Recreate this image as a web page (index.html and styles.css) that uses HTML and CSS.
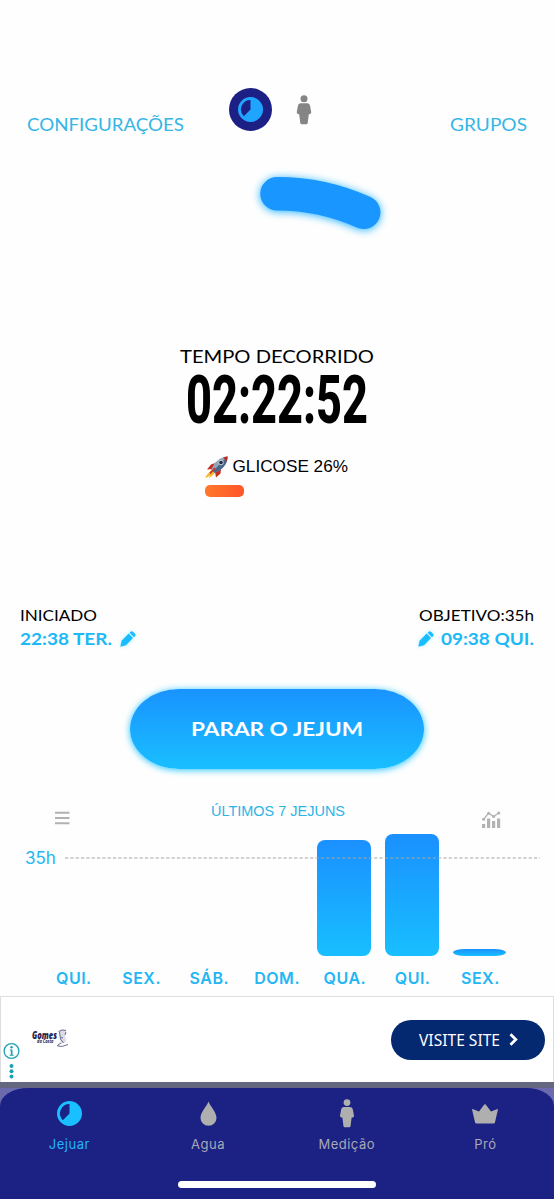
FILE: index.html
```html
<!DOCTYPE html>
<html lang="pt">
<head>
<meta charset="utf-8">
<title>Jejum</title>
<link rel="stylesheet" href="styles.css">
</head>
<body>
<svg class="defs" width="0" height="0">
  <defs>
    <symbol id="pie" viewBox="0 0 25 25"><path fill-rule="evenodd" d="M12.5 0a12.5 12.5 0 1 1 0 25a12.5 12.5 0 0 1 0-25zM12.5 3a9.5 9.5 0 0 0-6.7 16.2l6.7-6.7z"/></symbol>
    <symbol id="person" viewBox="0 0 16 30"><circle cx="8" cy="3.7" r="3.5"/><path d="M5 8.2h6c2 0 2.7 1.200 3.100 2.800L15.200 17c.2 1.400-.5 2-2.400 2.200L11.700 28c-.2 1-.6 1.300-1.500 1.300H5.800c-.9 0-1.300-.3-1.500-1.300L3.200 19.200C1.300 19 .6 18.400.8 17L1.900 11C2.300 9.400 3 8.200 5 8.200z"/></symbol>
    <symbol id="pencil" viewBox="0 0 16 16"><path d="M.3 15.700L1.600 9.800 8.700 2.600 13 7.100 6 14.200zM9.600 1.700L10.500.8q1.200-1 2.500 0L15 2.800q1.100 1.200 0 2.400L14 6.200z"/></symbol>
  </defs>
</svg>
<main class="screen">
  <header class="top">
    <svg class="label cyan" width="157" height="24"><text x="0" y="17.500" textLength="157" lengthAdjust="spacingAndGlyphs">CONFIGURAÇÕES</text></svg>
    <div class="mode"><svg width="25" height="25"><use href="#pie"/></svg></div>
    <svg class="body-icon" width="16" height="30"><use href="#person"/></svg>
    <svg class="label cyan last" width="77" height="24"><text x="0" y="17.500" textLength="77" lengthAdjust="spacingAndGlyphs">GRUPOS</text></svg>
  </header>

  <section class="ring">
    <svg width="554" height="185" viewBox="0 160 554 185">
      <path class="arc" d="M277 193.700A209 209 0 0 1 363.700 212.300"/>
    </svg>
  </section>

  <section class="elapsed">
    <svg class="caption" width="196" height="24"><text x="1" y="18.300" textLength="194" lengthAdjust="spacingAndGlyphs">TEMPO DECORRIDO</text></svg>
    <svg class="timer" width="182" height="56"><text x="0" y="53.500" textLength="182" lengthAdjust="spacingAndGlyphs">02:22:52</text></svg>
    <div class="stage">
      <div class="stage-row">
        <svg width="24" height="24" viewBox="0 0 24 24">
          <path d="M7 14L.5 21.500 1 23 5 20.500 4 23.500 10 18z" fill="#f5b934"/>
          <path d="M10 8L6 9.500 2 14.500 7.500 14zM16 14L15.500 18.500 11 22.500 10 17z" fill="#c92b20"/>
          <path d="M6.500 14.500C9 7 15 2 22.500 1.500C22.800 9 17 15.500 9.500 17.800z" fill="#8fa5b8"/>
          <path d="M8 16.300C12 12 17 7 22.500 1.500C22.800 9 17 15.500 9.500 17.800z" fill="#4c6688"/>
          <path d="M18 2.500Q20 1.600 22.500 1.500Q22.500 4.500 21.500 6.500Q20 4 18 2.500z" fill="#b92d26"/>
          <circle cx="16" cy="7.500" r="2.300" fill="#1e2b42" stroke="#c8d3dc"/>
          <path d="M10 13L5 18.500" stroke="#d12e22" stroke-width="1.800"/>
        </svg>
        <svg width="118" height="24"><text x="3.500" y="17.300" textLength="115.500" lengthAdjust="spacingAndGlyphs">GLICOSE 26%</text></svg>
      </div>
      <div class="track"><div class="fill"></div></div>
    </div>
  </section>

  <section class="times">
    <div class="time">
      <svg width="78" height="22"><text x="0" y="15.500" textLength="77" lengthAdjust="spacingAndGlyphs">INICIADO</text></svg>
      <div class="edit">
        <svg class="strong" width="93" height="24"><text x="0" y="17.500" textLength="92" lengthAdjust="spacingAndGlyphs">22:38 TER.</text></svg>
        <svg class="pencil" width="16" height="16"><use href="#pencil"/></svg>
      </div>
    </div>
    <div class="time right">
      <svg width="115" height="22"><text x="0" y="15.500" textLength="115" lengthAdjust="spacingAndGlyphs">OBJETIVO:35h</text></svg>
      <div class="edit">
        <svg class="pencil" width="16" height="16"><use href="#pencil"/></svg>
        <svg class="strong" width="93" height="24"><text x="0" y="17.500" textLength="93" lengthAdjust="spacingAndGlyphs">09:38 QUI.</text></svg>
      </div>
    </div>
  </section>

  <div class="action">
    <button class="stop"><svg width="172" height="30"><text x="0" y="22" textLength="172" lengthAdjust="spacingAndGlyphs">PARAR O JEJUM</text></svg></button>
  </div>

  <section class="history">
    <div class="history-head">
      <svg class="tool" width="15" height="14"><path d="M0 1.800h14.500M0 7h14.500M0 12.300h14.500" stroke="#b2b2b2" stroke-width="2"/></svg>
      <svg class="title" width="135" height="24"><text x="0" y="16" textLength="134" lengthAdjust="spacingAndGlyphs">ÚLTIMOS 7 JEJUNS</text></svg>
      <svg class="tool" width="19" height="17" fill="#b2b2b2"><path d="M0 13h3.200v4H0zM5 7.500h3.200V17H5zM10 10h3.200v7H10zM15 7.500h3.200V17H15z"/><path d="M1.500 8.500L6.600 2.200 11.600 5.500 16.800 2" fill="none" stroke="#b2b2b2" stroke-width="1.300"/><circle cx="1.600" cy="8.300" r="1.500"/><circle cx="6.600" cy="2.200" r="1.500"/><circle cx="11.600" cy="5.400" r="1.500"/><circle cx="16.800" cy="1.900" r="1.500"/></svg>
    </div>
    <div class="plot">
      <div class="bars">
        <i></i><i></i><i></i><i></i>
        <div class="bar" style="height:116px"></div>
        <div class="bar" style="height:122px"></div>
        <div class="bar small" style="height:7px"></div>
      </div>
      <div class="goal"><span>35h</span><svg width="475" height="2"><path d="M0 1H475" stroke="#a3a3a3" stroke-width="1.200" stroke-dasharray="3.200 2.130"/></svg></div>
    </div>
    <div class="days"><span>QUI.</span><span>SEX.</span><span>SÁB.</span><span>DOM.</span><span>QUA.</span><span>QUI.</span><span>SEX.</span></div>
  </section>

  <aside class="ad">
    <div class="ad-info">
      <svg width="18" height="36" viewBox="0 0 18 36"><circle cx="8.500" cy="9" r="7.400" fill="none" stroke="#1ba1b0" stroke-width="1.300"/><g fill="#1ba1b0"><circle cx="8.500" cy="5.200" r="1.200"/><path d="M6.800 7.600h2.700v5.200h1.200v1H6.500v-1h1.300V8.600h-1z"/><circle cx="8.500" cy="24" r="2"/><circle cx="8.500" cy="29.200" r="2"/><circle cx="8.500" cy="34.500" r="2"/></g></svg>
    </div>
    <svg class="brand" width="38" height="20" viewBox="0 0 38 20">
      <text x="0" y="9.700" class="brand-name" textLength="25" lengthAdjust="spacingAndGlyphs">Gomes</text>
      <text x="5" y="13.700" class="brand-sub" textLength="16.500" lengthAdjust="spacingAndGlyphs">da Costa</text>
      <path d="M27 2Q31-.5 34 1.500L33 6 34 13 29 15 28 9z" fill="#d9dbe5"/>
      <path d="M26.500 2.500Q30 0 34 1.500M27.500 3L28.500 10 31.500 14M34 3L33 6M29 8.500L31 9M29 14Q25 16 25.500 17Q30 18.500 36 15.500" fill="none" stroke="#696d94"/>
    </svg>
    <div class="visit"><svg width="82" height="24"><text x="0" y="17.500" textLength="81" lengthAdjust="spacingAndGlyphs">VISITE SITE</text></svg><svg width="9" height="13"><path d="M1.500 1.300L6.800 6.500 1.500 11.700" fill="none" stroke="#fff" stroke-width="2.800"/></svg></div>
  </aside>

  <footer class="dock">
    <nav class="tabs">
      <div class="tab on"><svg width="25" height="29"><use href="#pie" y="2" width="25" height="25"/></svg><span>Jejuar</span></div>
      <div class="tab"><svg width="17" height="29"><path d="M8.500 2.500C10 7 16.500 13 16.500 19A8 7.700 0 0 1 .5 19C.5 13 7 7 8.500 2.500z"/></svg><span>Agua</span></div>
      <div class="tab"><svg width="16" height="29"><use href="#person" width="16" height="29"/></svg><span>Medição</span></div>
      <div class="tab"><svg width="26" height="29"><path d="M.5 10L7 12.500 12.300 5.500Q13 4.900 13.700 5.500L19 12.500 25.500 10Q26 10 25.900 10.700L23 23.200Q22.800 24.500 21.500 24.500H4.500Q3.200 24.500 3 23.200L.1 10.700Q0 10 .5 10z"/></svg><span>Pró</span></div>
    </nav>
    <div class="home"></div>
  </footer>
</main>
</body>
</html>
```
FILE: styles.css
```css
* { box-sizing: border-box; }
body { margin: 0; background: #fefefe; font-family: Lato, sans-serif; }
svg { display: block; flex: none; overflow: visible; }
.defs { height: 0; overflow: hidden; }
.screen { width: 554px; height: 1199px; overflow: hidden; display: flex; flex-direction: column; }
.screen > * { flex: none; }

.top { height: 160px; padding: 88px 27px 0; display: flex; align-items: flex-start; }
.label { margin-top: 25px; font-size: 17px; }
.cyan { fill: #35b6e6; }
.mode { width: 43px; height: 43px; margin: 0 24px 0 45px; border-radius: 50%; background: #1c2085; fill: #20a5ff; display: grid; place-items: center; }
.body-icon { margin-top: 7px; fill: #858585; }
.last { margin-left: auto; }

.ring { height: 185px; }
.arc { fill: none; stroke: #1996ff; stroke-width: 33.500; stroke-linecap: round; filter: drop-shadow(0 1px 4px #20b2ff); }

.elapsed { height: 257px; display: flex; flex-direction: column; align-items: center; }
.caption { font-size: 18px; }
.timer { font-family: Roboto, sans-serif; font-weight: 800; font-size: 66px; }
.stage { width: 145px; margin: 30px 0 0 1px; font-family: "Liberation Sans", sans-serif; font-size: 17px; }
.stage-row { display: flex; }
.track { height: 12px; margin-top: 6px; border-radius: 5px; }
.fill { width: 39px; height: 12px; border-radius: 5px; background: linear-gradient(100deg, #ff7a2b, #ff542b); }

.times { height: 87px; padding: 3px 20px 0; display: flex; justify-content: space-between; font-size: 16px; }
.time { display: flex; flex-direction: column; }
.right { align-items: flex-end; }
.edit { display: flex; align-items: center; gap: 7px; }
.strong { font-size: 17px; font-weight: 700; fill: #1cb9f7; }
.pencil { fill: #18bdff; filter: drop-shadow(0 0 2px #b5ecff); }

.action { height: 111px; display: flex; justify-content: center; align-items: flex-start; }
.stop { width: 294px; height: 80px; padding: 0; border: 0; border-radius: 49px / 40px; background: linear-gradient(#1993ff, #19bfff); box-shadow: 0 1px 7px #20c4ff; display: grid; place-items: center; font: 700 19.500px Lato, sans-serif; fill: #fff; }

.history { height: 196px; color: #23b6f4; }
.history-head { height: 34px; padding: 0 53px 0 55px; display: flex; justify-content: space-between; align-items: flex-start; }
.tool { margin-top: 11px; }
.title { font-family: "Liberation Sans", sans-serif; font-size: 15px; fill: #2bb5e6; margin-right: -5px; }
.plot { height: 122px; display: grid; }
.bars { grid-area: 1 / 1; display: grid; grid-template-columns: repeat(7, 68px); padding-left: 39px; justify-items: center; align-items: end; }
.bar { width: 54px; margin-right: 3px; border-radius: 8px; background: linear-gradient(#1a90ff, #18bfff); }
.small { width: 53px; border-radius: 12px / 3.500px; margin-right: 4px; }
.goal { grid-area: 1 / 1; height: 48px; padding-left: 25px; display: flex; align-items: center; justify-content: space-between; padding-right: 14px; font: 17px Inter, sans-serif; }
.days { display: grid; grid-template-columns: repeat(7, 67.750px); padding: 12px 0 0 40px; text-align: center; font: 600 16px/20px Inter, sans-serif; letter-spacing: .5px; }

.ad { height: 86px; border: 1px solid #dedede; border-bottom: 0; background: #fff; display: flex; align-items: center; padding-right: 8px; }
.ad-info { width: 31px; align-self: flex-end; height: 40px; padding-left: 2px; }
.brand { fill: #1f2151; margin-bottom: 2px; }
.brand-name { font: italic 900 10px "Open Sans", sans-serif; }
.brand-sub { font: italic 700 5px "Open Sans", sans-serif; }
.visit { width: 154px; height: 40px; margin-left: auto; border-radius: 20px; background: #052970; display: flex; align-items: center; padding-left: 28px; gap: 8px; font: 16px "Noto Sans", sans-serif; fill: #fff; }

.dock { height: 117px; padding-top: 6px; background: linear-gradient(#646780 6px, #6a6aad 6px, #6a6aad 50px, #1c2184 50px); display: flex; flex-direction: column; }
.tabs { height: 93px; padding-top: 11px; border-radius: 28px 28px 0 0 / 18px 18px 0 0; background: #1c2184; display: grid; grid-template-columns: repeat(4, 138.700px); color: #a9a9b4; fill: #afafaf; font: 13px/18px Inter, sans-serif; letter-spacing: .5px; }
.tab { display: flex; flex-direction: column; align-items: center; gap: 7px; }
.on { color: #20b5ff; fill: #19bfff; }
.home { width: 198px; height: 7px; border-radius: 4px; background: #fff; margin: 0 auto; box-shadow: 0 0 0 100px #1c2184; clip-path: inset(0 -200px -20px); }
```
